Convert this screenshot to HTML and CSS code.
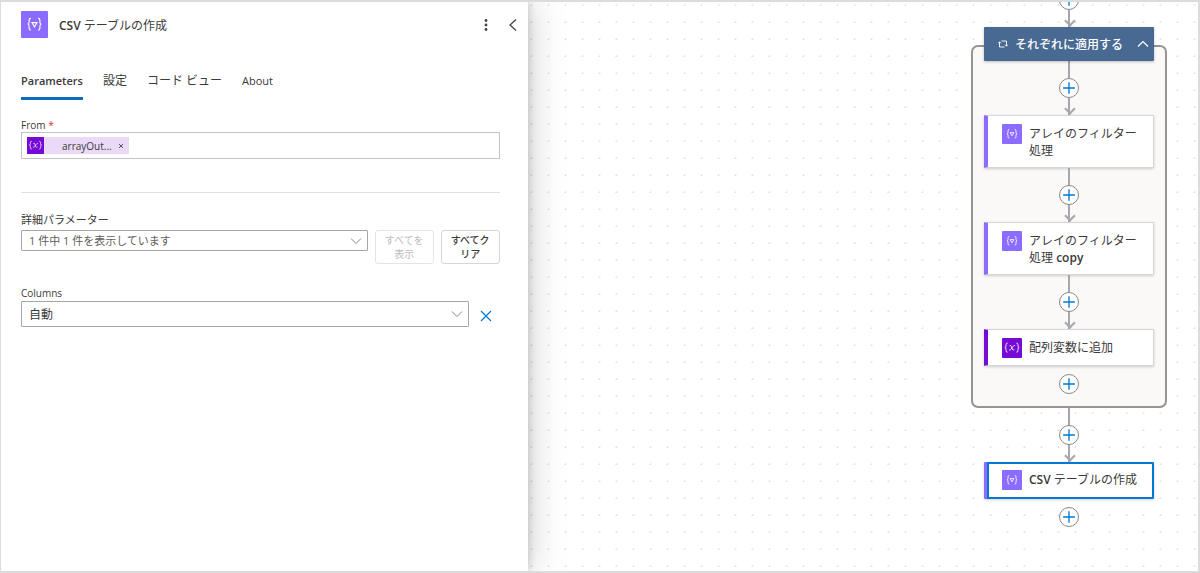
FILE: index.html
```html
<!DOCTYPE html>
<html lang="ja">
<head>
  <meta charset="UTF-8" />
  <meta name="viewport" content="width=device-width, initial-scale=1.0" />
  <title>CSV テーブルの作成</title>
  <link rel="stylesheet" href="styles.css">
</head>
<body>
  <!-- shared icons -->
  <svg class="sprite" aria-hidden="true">
    <symbol id="i-data" viewBox="0 0 24 24">
      <path d="M8.8 6.5Q7.2 6.5 7.2 8.2V10Q7.2 11.7 6 11.7Q7.2 11.7 7.2 13.5V15.3Q7.2 17 8.8 17M15.2 6.5Q16.8 6.5 16.8 8.2V10Q16.8 11.7 18 11.7Q16.8 11.7 16.8 13.5V15.3Q16.8 17 15.2 17M9.8 10.3H14.2L12 14.2Z" />
    </symbol>
    <symbol id="i-var" viewBox="0 0 24 24">
      <path d="M6.8 6Q4.8 6 4.8 7.8V9.7Q4.8 11.5 3.4 11.5Q4.8 11.5 4.8 13.3V15.2Q4.8 17 6.8 17M17.2 6Q19.2 6 19.2 7.8V9.7Q19.2 11.5 20.6 11.5Q19.2 11.5 19.2 13.3V15.2Q19.2 17 17.2 17M9 9.3Q10.9 8.3 11.4 10.4L12.3 13.4Q12.8 15.2 14.8 14M15.4 8.9Q14 8.7 12.6 10.8L10.9 13.4Q9.8 14.9 8.5 14.4" />
    </symbol>
    <symbol id="i-plus" viewBox="0 0 20 20">
      <path d="M10 3.5V16.5M3.5 10H16.5" />
    </symbol>
    <symbol id="i-down" viewBox="0 0 12 8">
      <path d="M1 1.5L6 6.5L11 1.5" />
    </symbol>
  </svg>

  <div class="app">
    <aside class="panel">
      <header class="panel-header">
        <svg class="tile tile-lg data"><use href="#i-data" /></svg>
        <h1><b>CSV</b> テーブルの作成</h1>
        <button class="icon-btn" aria-label="メニュー">
          <svg width="16" height="16" viewBox="0 0 16 16" fill="#444"><circle cx="8" cy="3.5" r="1.4" /><circle cx="8" cy="8" r="1.4" /><circle cx="8" cy="12.5" r="1.4" /></svg>
        </button>
        <button class="icon-btn" aria-label="折りたたむ">
          <svg width="16" height="16" viewBox="0 0 16 16" fill="none" stroke="#444" stroke-width="1.3"><path d="M11 2.5L5 8L11 13.5" /></svg>
        </button>
      </header>

      <nav class="tabs">
        <button class="tab active" lang="en">Parameters</button>
        <button class="tab">設定</button>
        <button class="tab">コード ビュー</button>
        <button class="tab" lang="en">About</button>
      </nav>

      <div class="field">
        <label for="from">From <span class="required">*</span></label>
        <div class="token-box">
          <span class="token">
            <svg class="tile tile-sm var"><use href="#i-var" /></svg>
            <span class="token-text">arrayOut...</span>
            <button class="token-remove" aria-label="削除"><svg width="6" height="6" viewBox="0 0 6 6"><path d="M1 1L5 5M5 1L1 5" /></svg></button>
          </span>
          <input type="text" id="from" />
        </div>
      </div>

      <hr />

      <div class="field advanced">
        <label for="advanced">詳細パラメーター</label>
        <div class="field-row">
          <div class="select short">
            <select id="advanced"><option>1 件中 1 件を表示しています</option></select>
            <svg class="chevron"><use href="#i-down" /></svg>
          </div>
          <button class="btn" disabled>すべてを表示</button>
          <button class="btn">すべてクリア</button>
        </div>
      </div>

      <div class="field columns">
        <label for="columns">Columns</label>
        <div class="field-row">
          <div class="select">
            <select id="columns"><option>自動</option></select>
            <svg class="chevron"><use href="#i-down" /></svg>
          </div>
          <button class="clear-btn" aria-label="クリア">
            <svg width="12" height="12" viewBox="0 0 12 12"><path d="M1 1L11 11M11 1L1 11" /></svg>
          </button>
        </div>
      </div>
    </aside>

    <main class="canvas">
      <div class="flow">
        <div class="connector arrow"><button class="add" aria-label="追加"><svg><use href="#i-plus" /></svg></button></div>

        <section class="scope">
          <button class="scope-header">
            <svg width="10" height="8" viewBox="0 0 10 8" fill="none" stroke="#fff" stroke-width="0.9"><path d="M3.5 1H8.5V6M7 4.7L8.5 6.2L9.8 4.7M6.5 7H1.5V2M0.2 3.3L1.5 1.8L3 3.3" /></svg>
            <span>それぞれに適用する</span>
            <svg width="12" height="8" viewBox="0 0 12 8" fill="none" stroke="#fff" stroke-width="1.2"><path d="M1 6.5L6 1.5L11 6.5" /></svg>
          </button>
          <div class="connector arrow"><button class="add" aria-label="追加"><svg><use href="#i-plus" /></svg></button></div>
          <div class="card">
            <svg class="tile data"><use href="#i-data" /></svg>
            <span>アレイのフィルター処理</span>
          </div>
          <div class="connector arrow"><button class="add" aria-label="追加"><svg><use href="#i-plus" /></svg></button></div>
          <div class="card">
            <svg class="tile data"><use href="#i-data" /></svg>
            <span>アレイのフィルター処理 <b>copy</b></span>
          </div>
          <div class="connector arrow"><button class="add" aria-label="追加"><svg><use href="#i-plus" /></svg></button></div>
          <div class="card purple">
            <svg class="tile var"><use href="#i-var" /></svg>
            <span>配列変数に追加</span>
          </div>
          <div class="connector end"><button class="add" aria-label="追加"><svg><use href="#i-plus" /></svg></button></div>
        </section>

        <div class="connector arrow"><button class="add" aria-label="追加"><svg><use href="#i-plus" /></svg></button></div>
        <div class="card selected">
          <svg class="tile data"><use href="#i-data" /></svg>
          <span><b>CSV</b> テーブルの作成</span>
        </div>
        <div class="connector end"><button class="add" aria-label="追加"><svg><use href="#i-plus" /></svg></button></div>
      </div>
    </main>
  </div>
</body>
</html>
```

FILE: styles.css
```css
:root {
  --text: #3b3a39;
  --border: #c4c4c4;
  --blue: #0078d4;
  --data: #8c6cff;
  --var: #770bd6;
  --line: #a6a6ad;
}

* {
  box-sizing: border-box;
}

html, body {
  margin: 0;
  height: 100%;
}

body, button, input, select {
  font-family: "Open Sans", "Noto Sans CJK JP", sans-serif;
  font-size: 12px;
  color: var(--text);
}

button {
  padding: 0;
  border: none;
  background: none;
  cursor: pointer;
}

b {
  font-weight: 600;
}

.sprite {
  display: none;
}

.app {
  display: flex;
  height: 100%;
  border: 2px solid #dcdcdc;
  border-left-width: 1px;
  overflow: hidden;
}

/* icon tiles */
.tile {
  flex: none;
  width: 20px;
  height: 20px;
  border-radius: 1px;
  fill: none;
  stroke: #fff;
  stroke-width: 1;
}

.tile-lg {
  width: 27px;
  height: 27px;
}

.tile-sm {
  width: 17px;
  height: 17px;
  border-radius: 0;
}

.data {
  background: var(--data);
}

.var {
  background: var(--var);
}

/* left panel */
.panel {
  flex: 0 0 44%;
  padding: 9px 28px 0 20px;
  background: #fff;
  box-shadow: 0 0 36px rgba(0, 0, 0, 0.22), 0 0 8px rgba(0, 0, 0, 0.18);
  z-index: 1;
}

.panel-header {
  display: flex;
  align-items: center;
  height: 27px;
  margin-right: -25px;
}

.panel-header h1 {
  flex: 1;
  margin: 0 0 0 11px;
  font-size: 12px;
  font-weight: 400;
}

.icon-btn {
  display: flex;
  width: 16px;
  height: 16px;
  margin-right: 11px;
}

.icon-btn:last-child {
  margin-right: 4px;
}

.tabs {
  display: flex;
  gap: 20px;
  margin-top: 32px;
}

.tab {
  height: 30px;
  padding-bottom: 6px;
  border-bottom: 3px solid transparent;
  line-height: 18px;
}

.tab:lang(en) {
  font-size: 11px;
}

.tab.active {
  border-color: #0f6cbd;
  font-weight: 600;
}

.field label {
  display: block;
  font-size: 10px;
  line-height: 14px;
}

.required {
  color: #c4314b;
}

.tabs + .field {
  margin-top: 18px;
}

.token-box {
  display: flex;
  align-items: center;
  height: 27px;
  padding: 0 5px;
  border: 1px solid var(--border);
}

.token {
  display: flex;
  align-items: center;
  width: 102px;
  height: 17px;
  background: #eadaf8;
}

.token-text {
  flex: 1;
  padding-left: 18px;
  font-size: 10px;
}

.token-remove {
  display: flex;
  margin-right: 5px;
}

.token-remove svg {
  stroke: #555;
  stroke-width: 1;
}

.token-box input {
  flex: 1;
  min-width: 0;
  border: none;
  outline: none;
  background: none;
}

hr {
  height: 1px;
  margin: 33px 0 18px;
  border: none;
  background: #e1e1e1;
}

.field.advanced label {
  margin-bottom: 1px;
  font-size: 11px;
  line-height: 18px;
}

.field-row {
  display: flex;
  gap: 7px;
}

.select {
  display: grid;
  flex: 1;
  height: 26px;
  align-items: center;
}

.select.short {
  height: 21px;
}

.select select,
.select .chevron {
  grid-area: 1 / 1;
}

.select select {
  width: 100%;
  height: 100%;
  padding: 0 7px;
  border: 1px solid #a8a6a4;
  border-radius: 1px;
  background: #fff;
  appearance: none;
}

.select.short select {
  font-size: 11px;
  color: #605e5c;
}

.chevron {
  justify-self: end;
  width: 12px;
  height: 8px;
  margin-right: 6px;
  fill: none;
  stroke: #888;
  pointer-events: none;
}

.btn {
  width: 59px;
  height: 34px;
  padding: 0 8px;
  border: 1px solid #d6d6d6;
  border-radius: 3px;
  font-size: 10px;
  font-weight: 500;
  line-height: 14px;
}

.btn:disabled {
  border-color: #e4e4e4;
  color: #bdbdbd;
  font-weight: 400;
}

.field.columns {
  margin-top: 22px;
}

.field.columns label {
  margin-bottom: 1px;
}

.field.columns .field-row {
  align-items: center;
  gap: 11px;
}

.clear-btn {
  display: flex;
  width: 20px;
  padding-top: 3px;
}

.clear-btn svg {
  stroke: var(--blue);
  stroke-width: 1.2;
}

/* designer canvas */
.canvas {
  flex: 1;
  display: flex;
  justify-content: flex-end;
  align-items: flex-start;
  padding-right: 31px;
  background: radial-gradient(circle, #e2e2e2 1px, transparent 1px) right 12px top 12px / 17px 17px #fff;
  overflow: hidden;
}

.flow {
  display: flex;
  flex-direction: column;
  align-items: center;
  width: 196px;
  margin-top: -29px;
}

.connector {
  display: flex;
  align-items: center;
  justify-content: center;
  width: 20px;
  height: 54px;
  background: linear-gradient(var(--line), var(--line)) center / 2px 100% no-repeat;
  position: relative;
}

.connector.arrow::after {
  content: "";
  position: absolute;
  bottom: 2px;
  left: 7px;
  width: 6px;
  height: 6px;
  border: solid var(--line);
  border-width: 0 2px 2px 0;
  transform: rotate(45deg);
}

.connector.end {
  height: 36px;
  background: none;
}

.add {
  display: flex;
  width: 20px;
  height: 20px;
  border: 1px solid #888;
  border-radius: 50%;
  background: #fff;
}

.add svg {
  width: 18px;
  height: 18px;
  stroke: var(--blue);
  stroke-width: 1.5;
}

.scope {
  display: flex;
  flex-direction: column;
  align-items: center;
  width: 100%;
  margin-top: 18px;
  padding-bottom: 4px;
  border: 2px solid #979593;
  border-radius: 7px;
  background: #faf9f8;
}

.scope-header {
  display: flex;
  align-items: center;
  width: 170px;
  height: 34px;
  margin-top: -20px;
  padding: 0 5px 0 14px;
  border-radius: 1px;
  background: #486991;
  color: #fff;
  font-weight: 500;
  box-shadow: 0 1px 3px rgba(0, 0, 0, 0.25);
  z-index: 1;
}

.scope-header span {
  flex: 1;
  padding-left: 7px;
  text-align: left;
}

.card {
  display: flex;
  align-items: flex-start;
  gap: 7px;
  width: 170px;
  padding: 8px 8px 7px 14px;
  border: 1px solid #d6d6d6;
  border-left: 4px solid var(--data);
  border-radius: 1px;
  background: #fff;
  line-height: 17px;
  box-shadow: 0 1px 3px rgba(0, 0, 0, 0.18);
}

.card span {
  padding: 1px 0;
}

.card.purple {
  border-left-color: var(--var);
}

.card.selected {
  border-color: var(--data);
  border-width: 0 0 0 3px;
  padding: 8px 8px 9px 15px;
  box-shadow: inset 0 0 0 2px var(--blue), 0 1px 3px rgba(0, 0, 0, 0.18);
}
```
